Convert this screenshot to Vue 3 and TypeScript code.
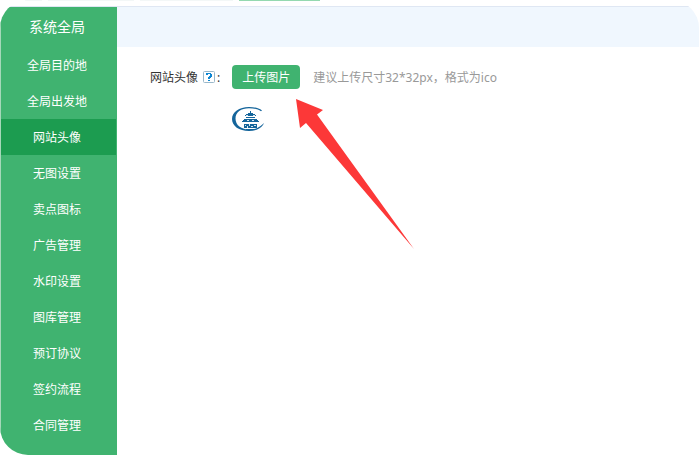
<script setup lang="ts">
import { ref } from 'vue'

const menu: string[] = [
  '全局目的地', '全局出发地', '网站头像', '无图设置', '卖点图标', '广告管理',
  '水印设置', '图库管理', '预订协议', '签约流程', '合同管理',
]
const active = ref('网站头像')
</script>

<template>
  <div class="page">
    <div class="tabs">
      <span class="tab short"></span>
      <span class="tab"></span>
      <span class="tab wide"></span>
      <span class="tab current"></span>
    </div>
    <div class="body">
      <nav class="sidebar">
        <h2 class="title">系统全局</h2>
        <a
          v-for="item in menu"
          :key="item"
          href="#"
          class="item"
          :class="{ active: item === active }"
          @click.prevent="active = item"
        >{{ item }}</a>
      </nav>
      <main class="content">
        <div class="toolbar"></div>
        <form class="row" @submit.prevent>
          <label class="label" for="upload">
            网站头像
            <svg class="help" viewBox="0 0 12 12" width="12" height="12" aria-hidden="true">
              <rect x="0.5" y="0.5" width="11" height="11" rx="1" fill="#fff" stroke="#9ab8ca" />
              <path d="M3 2h5v1h1v3H8v1H7v1H5V6h1V5h1V3H5v1H3zM5 9h2v1H5z" fill="#0d86d2" />
            </svg>
            <span>:</span>
          </label>
          <div class="field">
            <div class="line">
              <button id="upload" class="upload" type="button">上传图片</button>
              <span class="hint">建议上传尺寸32*32px，格式为ico</span>
            </div>
            <svg class="logo" viewBox="0 0 32 32" width="32" height="32" aria-hidden="true">
              <g fill="#15659b">
                <path d="M30 7.500C27 5 22 4 17 4C7 4 0 9 0 16C0 23 7 28 17 28C23 28 28 26 31 22L32 20C29 23 25 26.500 18 26.700C9 26.700 3.500 22 3.500 15.500C3.500 9 9 5.200 17 5.200C22 5.200 26 6 29 8.300Z" />
                <path d="M18 8h1v2h2v1h2v1h1v1H13v-1h1v-1h2v-1h2zM14 14h9v1h-9zM12 16h13v1h1v1h1v1H10v-1h1v-1h1zM12 21h13v4H12zM14 26h9v1h-9z" />
              </g>
              <path d="M14 12h2v1h-2zM21 12h2v1h-2zM15 17h2v1h-2zM20 17h2v1h-2zM13 22h1v1h-1zM15 23h1v2h-1zM17 21h1v2h-1zM19 23h2v1h-2zM22 22h2v1h-2z" fill="#d5e6f0" />
            </svg>
          </div>
        </form>
      </main>
    </div>
    <svg class="arrow" viewBox="0 0 118 150" width="118" height="150" aria-hidden="true">
      <path d="M0 0L27 11L21 15.500L118 150L10 24L4 29Z" fill="#fc3838" />
    </svg>
  </div>
</template>

<style>
body {
  margin: 0;
  background: #fff;
}
</style>

<style scoped>
.page {
  position: relative;
  display: flex;
  flex-direction: column;
  box-sizing: border-box;
  min-height: 100vh;
  border-radius: 28px;
  overflow: hidden;
  background: #fff;
  color: #333;
  font: 12px/22px "Noto Sans", "Noto Sans CJK SC", sans-serif;
}
.tabs {
  display: flex;
  gap: 6px;
  height: 6px;
  padding-left: 25px;
  border-bottom: 1px solid #dfe7f3;
}
.tab {
  width: 86px;
  height: 1px;
  background: #f3f7f7;
}
.tab.short {
  width: 17px;
}
.tab.wide {
  width: 93px;
}
.tab.current {
  width: 81px;
  background: #94d9b0;
}
.body {
  display: flex;
  flex: 1;
}
.sidebar {
  width: 116px;
  flex: none;
  border-left: 1px solid #a5d8b9;
  background: #40b370;
}
.title {
  margin: 0;
  padding-right: 4px;
  color: #fff;
  font-size: 14px;
  font-weight: 400;
  line-height: 40px;
  text-align: center;
}
.item {
  display: block;
  margin-right: 1px;
  padding: 2px 3px 0 0;
  color: #fff;
  line-height: 34px;
  text-align: center;
  text-decoration: none;
}
.item.active {
  background: #1c9c50;
}
.content {
  flex: 1;
  min-width: 0;
}
.toolbar {
  height: 40px;
  background: #f0f7fe;
}
.row {
  display: flex;
  gap: 12px;
  padding: 18px 33px;
}
.label {
  display: flex;
  align-items: center;
  gap: 5px;
  height: 22px;
  padding-top: 2px;
  white-space: nowrap;
}
.help {
  margin: 0 -3px 2px 0;
}
.line {
  display: flex;
  gap: 13px;
}
.upload {
  width: 68px;
  height: 24px;
  padding: 2px 0 0;
  border: 0;
  border-radius: 4px;
  background: #40b370;
  color: #fff;
  font: inherit;
}
.hint {
  padding-top: 2px;
  color: #999;
  white-space: nowrap;
}
.logo {
  display: block;
  margin-top: 14px;
}
.arrow {
  position: absolute;
  left: 296px;
  top: 99px;
  pointer-events: none;
}
</style>
